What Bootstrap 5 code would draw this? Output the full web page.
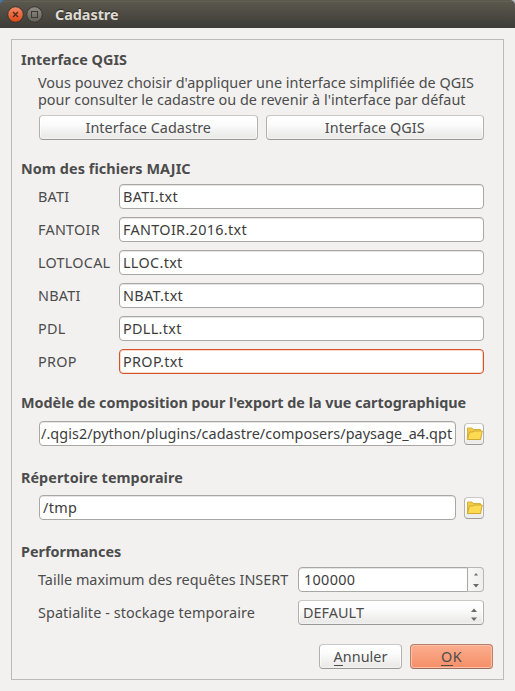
<!DOCTYPE html>
<html lang="fr">
<head>
<meta charset="utf-8">
<meta name="viewport" content="width=device-width, initial-scale=1">
<title>Cadastre</title>
<link href="https://cdn.jsdelivr.net/npm/bootstrap@5.3.0/dist/css/bootstrap.min.css" rel="stylesheet">
<style>
  body { background: #f2f1f0; color: #4c4c4c; font: 14.4px/17px "Noto Sans", "Open Sans", sans-serif; letter-spacing: .04px; height: 691px; overflow: hidden; }
  .titlebar { height: 28px; padding-left: 7px; background: linear-gradient(#4f4c44 0, #69655a 1px, #5a574d 2px, #3d3c37 28px); border-radius: 5px 5px 0 0; color: #dfdbd2; }
  .titlebar .caption { margin-left: 12px; line-height: 20px; padding-top: 1px; letter-spacing: -.03px; text-shadow: 0 -1px 1px #2c2b28; }
  .screen { background: linear-gradient(90deg, #3f76b5, #b9bcc0 60%); }
  .frame { margin: 11px; height: 641px; border: 1px solid #bcbbb9; padding: 10px 10px 0 9px; }
  h2 { font-size: inherit; font-weight: 700; line-height: 20px; margin: 0; white-space: nowrap; }
  .title-files { margin-top: 19px; letter-spacing: .08px; }
  .title-model { letter-spacing: -.02px; }
  .title-dir, .title-perf { margin-top: 22px; }
  .title-dir + div { margin-top: 7px; }
  .title-perf { letter-spacing: 0; }
  .title-perf + div { margin-top: 5px; }
  .group-body { padding-left: 18px; padding-right: 9px; }
  .intro { margin: 4px 0 7px -1px; white-space: nowrap; letter-spacing: .015px; }
  .files { margin: 5px 0 19px; }
  .file-label { flex: 0 0 80px; margin-left: -1px; letter-spacing: .25px; }
  .file-label + .field { margin-left: 1px; }
  .field { height: 25px; min-height: 0; padding: 0 4px 1px 3px; border: 1px solid #a9a7a3; border-radius: 4px; background: #fff; box-shadow: inset 0 1px 0 #e6e5e3; color: #3c3c3c; font: inherit; letter-spacing: .33px; min-width: 0; }
  .field:focus, .field.active { border-color: #d0532a; box-shadow: inset 0 0 0 1px #fbd9cb; }
  .field.path { padding: 0 2px 1px 1px; letter-spacing: .06px; }
  .push { height: 25px; padding: 0; border: 1px solid #b3b1ae; border-top-color: #c9c8c5; border-bottom-color: #9b9996; border-radius: 4px; background: linear-gradient(#fff 0, #fcfcfc 35%, #ebeae9 90%, #f3f2f2); color: #4c4c4c; font: inherit; line-height: 23px; letter-spacing: .04px; box-shadow: inset 1px 0 #fff9, inset -1px 0 #fff9; }
  .push.primary { background: linear-gradient(#fcae8f, #f58e67); border-color: #b3806c; border-bottom-color: #9b6f5e; box-shadow: inset 0 0 0 1px #ffbfa4; letter-spacing: .4px; }
  .dlg { width: 83px; }
  .key { border-bottom: 1px solid #4c4c4c; display: inline-block; line-height: 17px; }
  .browse { width: 20px; height: 22px; margin-left: 8px; line-height: 0; }
  .browse svg { margin-left: 1px; }
  .spin { width: 186px; }
  .spin .field { border-radius: 4px 0 0 4px; padding-left: 5px; }
  .steps { width: 17px; height: 25px; border: 1px solid #b9b7b4; border-left: 0; border-radius: 0 4px 4px 0; background: linear-gradient(90deg, #f8f8f8, #f0efee); }
  .choice { width: 186px; padding: 0 5px 0 4px; }
  .setting { margin-left: -1px; white-space: nowrap; letter-spacing: 0; }
  .setting.wide { letter-spacing: .08px; }
  .actions { margin-top: 19px; gap: 8px; }
</style>
</head>
<body>
<div class="screen">
  <header class="titlebar d-flex align-items-center">
    <svg width="36" height="18" viewBox="0 0 36 18">
      <defs>
        <linearGradient id="close" x2="0" y2="1"><stop stop-color="#f58a68"/><stop offset="1" stop-color="#dd4814"/></linearGradient>
        <linearGradient id="max" x2="0" y2="1"><stop stop-color="#8f8c84"/><stop offset="1" stop-color="#625f58"/></linearGradient>
      </defs>
      <circle cx="8.5" cy="9.500" r="7.8" fill="url(#close)" stroke="#35332f"/>
      <path d="M6 7l5 5M11 7l-5 5" stroke="#4c261b" stroke-width="1.3"/>
      <circle cx="27.5" cy="9.500" r="7.8" fill="url(#max)" stroke="#35332f"/>
      <rect x="24.500" y="6.500" width="6" height="6" fill="none" stroke="#3b3934"/>
    </svg>
    <div class="caption fw-bold">Cadastre</div>
  </header>
</div>

<main class="frame">
  <section>
    <h2>Interface QGIS</h2>
    <div class="group-body">
      <p class="intro">Vous pouvez choisir d'appliquer une interface simplifiée de QGIS<br>pour consulter le cadastre ou de revenir à l'interface par défaut</p>
      <div class="d-flex gap-2">
        <button type="button" class="btn push flex-fill w-50">Interface Cadastre</button>
        <button type="button" class="btn push flex-fill w-50">Interface QGIS</button>
      </div>
    </div>
  </section>

  <section>
    <h2 class="title-files">Nom des fichiers MAJIC</h2>
    <div class="group-body files d-flex flex-column gap-2">
      <div class="d-flex align-items-center"><label class="file-label" for="f1">BATI</label><input id="f1" class="form-control field" value="BATI.txt"></div>
      <div class="d-flex align-items-center"><label class="file-label" for="f2">FANTOIR</label><input id="f2" class="form-control field" value="FANTOIR.2016.txt"></div>
      <div class="d-flex align-items-center"><label class="file-label" for="f3">LOTLOCAL</label><input id="f3" class="form-control field" value="LLOC.txt"></div>
      <div class="d-flex align-items-center"><label class="file-label" for="f4">NBATI</label><input id="f4" class="form-control field" value="NBAT.txt"></div>
      <div class="d-flex align-items-center"><label class="file-label" for="f5">PDL</label><input id="f5" class="form-control field" value="PDLL.txt"></div>
      <div class="d-flex align-items-center"><label class="file-label" for="f6">PROP</label><input id="f6" class="form-control field active" value="PROP.txt"></div>
    </div>
  </section>

  <section>
    <h2 class="title-model">Modèle de composition pour l'export de la vue cartographique</h2>
    <div class="group-body d-flex align-items-center mt-2">
      <input class="form-control field path" aria-label="Modèle" value="/.qgis2/python/plugins/cadastre/composers/paysage_a4.qpt">
      <button type="button" class="btn push browse flex-shrink-0" aria-label="Parcourir">
        <svg width="16" height="14" viewBox="0 0 16 14"><path d="M.5 12.500v-11.500h4.500l1 1.500h7.500v10z" fill="#f0cb45" stroke="#d9b23a"/><path d="M.5 12.500L2.500 5h3.500l1-1h8.300l-1.800 8.500z" fill="#fcdb53" stroke="#d3a934"/></svg>
      </button>
    </div>
  </section>

  <section>
    <h2 class="title-dir">Répertoire temporaire</h2>
    <div class="group-body d-flex align-items-center">
      <input class="form-control field" aria-label="Répertoire" value="/tmp">
      <button type="button" class="btn push browse flex-shrink-0" aria-label="Parcourir">
        <svg width="16" height="14" viewBox="0 0 16 14"><path d="M.5 12.500v-11.500h4.500l1 1.500h7.500v10z" fill="#f0cb45" stroke="#d9b23a"/><path d="M.5 12.500L2.500 5h3.500l1-1h8.300l-1.800 8.500z" fill="#fcdb53" stroke="#d3a934"/></svg>
      </button>
    </div>
  </section>

  <section>
    <h2 class="title-perf">Performances</h2>
    <div class="group-body d-flex flex-column gap-2">
      <div class="d-flex align-items-center justify-content-between">
        <label class="setting" for="n1">Taille maximum des requêtes INSERT</label>
        <div class="spin d-flex flex-shrink-0">
          <input id="n1" class="form-control field" value="100000">
          <div class="steps d-flex align-items-center justify-content-center">
            <svg width="8" height="17" viewBox="0 0 8 17" fill="#6a6a69"><path d="M2 4.500L4 2l2 2.500zM1 13h6l-3 3.500z"/></svg>
          </div>
        </div>
      </div>
      <div class="d-flex align-items-center justify-content-between">
        <span class="setting wide">Spatialite - stockage temporaire</span>
        <button type="button" class="btn push choice d-flex align-items-center justify-content-between">
          <span>DEFAULT</span>
          <svg width="8" height="17" viewBox="0 0 8 17" fill="#6a6a69"><path d="M1 8L4 4.500 7 8zM1 13.500h6l-3 3.500z"/></svg>
        </button>
      </div>
    </div>
  </section>

  <div class="actions d-flex justify-content-end">
    <button type="button" class="btn push dlg"><span class="key">A</span>nnuler</button>
    <button type="button" class="btn push primary dlg"><span class="key">O</span>K</button>
  </div>
</main>
<script src="https://cdn.jsdelivr.net/npm/bootstrap@5.3.0/dist/js/bootstrap.bundle.min.js"></script>
</body>
</html>
